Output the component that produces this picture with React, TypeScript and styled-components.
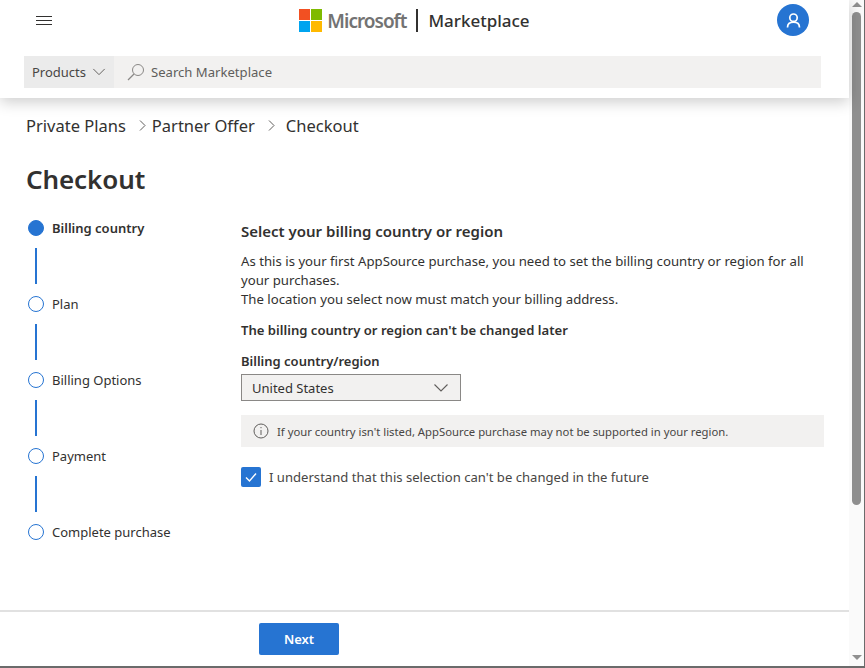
import React from 'react';
import styled, { createGlobalStyle } from 'styled-components';

const GlobalStyle = createGlobalStyle`
  html, body {
    margin: 0;
    height: 100%;
    overflow: hidden;
    background: #fff;
  }
  #root {
    height: 100%;
  }
  * {
    box-sizing: border-box;
  }
`;

const Frame = styled.div`
  width: 865px;
  height: 668px;
  display: flex;
  font-family: 'Noto Sans', 'Open Sans', sans-serif;
  color: #323130;
  border-right: 1px solid #6b6b6b;
  border-bottom: 2px solid #6b6b6b;
  overflow: hidden;
`;

const Main = styled.div`
  width: 849px;
  display: flex;
  flex-direction: column;
`;

const Header = styled.header`
  height: 98px;
  flex: none;
  padding: 0 28px 0 24px;
  background: #fff;
  box-shadow: 0 4px 14px rgba(0, 0, 0, 0.2);
  position: relative;
  display: flex;
  flex-direction: column;
`;

const TopRow = styled.div`
  height: 56px;
  flex: none;
  display: grid;
  grid-template-columns: 1fr auto 1fr;
  padding: 4px 12px 0 12px;
  align-items: start;
`;

const MenuButton = styled.div`
  width: 16px;
  height: 9px;
  margin-top: 12px;
  display: flex;
  flex-direction: column;
  justify-content: space-between;
  span {
    display: block;
    height: 1px;
    background: #323130;
  }
`;

const Brand = styled.div`
  display: flex;
  align-items: center;
  height: 33px;
  margin-left: -16px;
`;

const LogoGrid = styled.div`
  width: 23px;
  height: 23px;
  display: grid;
  grid-template-columns: 11px 11px;
  grid-template-rows: 11px 11px;
  gap: 1px;
  margin-right: 5px;
`;

const LogoTile = styled.span<{ $color: string }>`
  background: ${(p) => p.$color};
`;

const BrandName = styled.span`
  font-size: 19px;
  font-weight: 600;
  letter-spacing: -1px;
  color: #737373;
`;

const BrandDivider = styled.span`
  width: 2px;
  height: 23px;
  background: #323130;
  margin: 0 10px 0 10px;
`;

const ProductName = styled.span`
  font-size: 17px;
  font-weight: 500;
  color: #323130;
`;

const AvatarSlot = styled.div`
  display: flex;
  justify-content: flex-end;
`;

const Avatar = styled.div`
  width: 32px;
  height: 32px;
  border-radius: 50%;
  background: #2674d2;
  display: flex;
  align-items: center;
  justify-content: center;
`;

const SearchRow = styled.div`
  height: 32px;
  width: 797px;
  display: flex;
  background: #f2f1f0;
`;

const ProductsButton = styled.div`
  width: 90px;
  flex: none;
  background: #ebebeb;
  display: flex;
  align-items: center;
  padding-left: 8px;
  gap: 6px;
  font-size: 13px;
  line-height: 34px;
  color: #484644;
`;

const SearchField = styled.div`
  display: flex;
  align-items: center;
  padding-left: 13px;
  gap: 6px;
  font-size: 13.1px;
  color: #605e5c;
`;

const Content = styled.main`
  flex: 1;
  padding: 15px 0 0 26px;
  display: flex;
  flex-direction: column;
`;

const Breadcrumb = styled.nav`
  display: flex;
  align-items: center;
  height: 24px;
  font-size: 16.5px;
  color: #323130;
`;

const CrumbSep = styled.span<{ $wide?: boolean }>`
  display: flex;
  margin: 0 ${(p) => (p.$wide ? '11px' : '6px')} 0 13px;
`;

const Title = styled.h1`
  margin: 23px 0 0;
  font-size: 26px;
  line-height: 38px;
  font-weight: 600;
  letter-spacing: -0.1px;
  color: #323130;
`;

const Body = styled.div`
  display: flex;
  margin-top: 18px;
`;

const Stepper = styled.ol`
  width: 215px;
  flex: none;
  margin: 0;
  padding: 0 0 0 2px;
  list-style: none;
`;

const Step = styled.li`
  display: flex;
  flex-direction: column;
`;

const StepRow = styled.div`
  display: flex;
  align-items: center;
  gap: 8px;
  height: 24px;
`;

const StepDot = styled.span<{ $active?: boolean }>`
  width: 16px;
  height: 16px;
  flex: none;
  border-radius: 50%;
  border: 1.5px solid #2674d2;
  background: ${(p) => (p.$active ? '#2674d2' : '#fff')};
`;

const StepLabel = styled.span<{ $active?: boolean }>`
  font-size: 13px;
  font-weight: ${(p) => (p.$active ? 600 : 400)};
  color: #323130;
`;

const Connector = styled.span`
  width: 2px;
  height: 36px;
  margin: 8px 0 8px 7px;
  background: #2674d2;
`;

const Panel = styled.section`
  width: 583px;
  flex: none;
`;

const PanelTitle = styled.h2`
  margin: 0;
  padding-top: 4px;
  font-size: 15px;
  line-height: 22px;
  font-weight: 600;
  color: #323130;
`;

const Paragraph = styled.p`
  margin: 10px 0 0;
  font-size: 13.2px;
  line-height: 19px;
  color: #323130;
  width: 575px;
`;

const Warning = styled.p`
  margin: 11px 0 0;
  font-size: 13.1px;
  line-height: 20px;
  font-weight: 600;
`;

const FieldLabel = styled.label`
  display: block;
  margin-top: 11px;
  font-size: 13px;
  line-height: 20px;
  font-weight: 600;
`;

const Select = styled.div`
  width: 220px;
  height: 27px;
  margin-top: 3px;
  display: flex;
  align-items: center;
  justify-content: space-between;
  padding: 0 11px 0 10px;
  background: #f2f1f0;
  border: 1px solid #8a8886;
  font-size: 13px;
  color: #323130;
`;

const InfoBox = styled.div`
  height: 32px;
  margin-top: 14px;
  display: flex;
  align-items: center;
  gap: 8px;
  padding-left: 12px;
  background: #f2f1f0;
  font-size: 11.3px;
  color: #484644;
`;

const CheckRow = styled.div`
  display: flex;
  align-items: center;
  gap: 8px;
  margin-top: 20px;
  font-size: 13.1px;
  color: #484644;
`;

const CheckBox = styled.span`
  width: 20px;
  height: 20px;
  border-radius: 2px;
  background: #2674d2;
  display: flex;
  align-items: center;
  justify-content: center;
`;

const Footer = styled.footer`
  height: 56px;
  flex: none;
  border-top: 2px solid #e1e1e1;
  padding: 11px 0 0 259px;
`;

const NextButton = styled.button`
  width: 80px;
  height: 32px;
  border: 0;
  border-radius: 2px;
  background: #2674d2;
  color: #fff;
  font-family: inherit;
  font-size: 13px;
  font-weight: 600;
`;

const Scrollbar = styled.div`
  width: 15px;
  flex: none;
  background: #fafafa;
  display: flex;
  flex-direction: column;
  align-items: center;
`;

const ScrollArrow = styled.span<{ $down?: boolean }>`
  flex: none;
  margin: ${(p) => (p.$down ? 'auto 0 6px' : '2px 0 5px')};
  width: 0;
  height: 0;
  border-left: 5px solid transparent;
  border-right: 5px solid transparent;
  ${(p) =>
    p.$down ? 'border-top: 5px solid #8f8f8f;' : 'border-bottom: 5px solid #8f8f8f;'}
`;

const ScrollThumb = styled.span`
  width: 9px;
  height: 493px;
  border-radius: 5px;
  background: #8f8f8f;
`;

const Chevron = ({ size, color }: { size: number; color: string }) => (
  <svg width={size} height={size} viewBox="0 0 16 16" fill="none" stroke={color} strokeWidth="1.1">
    <path d="M1.5 4.5 8 11l6.5-6.5" />
  </svg>
);

const CrumbArrow = ({ color }: { color: string }) => (
  <svg width="7" height="11" viewBox="0 0 7 11" fill="none" stroke={color} strokeWidth="1">
    <path d="M1 .5l5 5-5 5" />
  </svg>
);

const steps = ['Billing country', 'Plan', 'Billing Options', 'Payment', 'Complete purchase'];

export default function App() {
  return (
    <>
      <GlobalStyle />
      <Frame>
        <Main>
          <Header>
            <TopRow>
              <MenuButton>
                <span />
                <span />
                <span />
              </MenuButton>
              <Brand>
                <LogoGrid>
                  <LogoTile $color="#f25022" />
                  <LogoTile $color="#7fba00" />
                  <LogoTile $color="#00a4ef" />
                  <LogoTile $color="#ffb900" />
                </LogoGrid>
                <BrandName>Microsoft</BrandName>
                <BrandDivider />
                <ProductName>Marketplace</ProductName>
              </Brand>
              <AvatarSlot>
                <Avatar>
                  <svg width="15" height="15" viewBox="0 0 15 15" fill="none" stroke="#fff" strokeWidth="1.7">
                    <circle cx="7.5" cy="4.7" r="3.7" />
                    <path d="M1.5 14.5c0-3.4 2.2-5.3 6-5.3s6 1.9 6 5.3" />
                  </svg>
                </Avatar>
              </AvatarSlot>
            </TopRow>
            <SearchRow>
              <ProductsButton>
                Products
                <Chevron size={14} color="#605e5c" />
              </ProductsButton>
              <SearchField>
                <svg width="18" height="18" viewBox="0 0 18 18" fill="none" stroke="#8a8886" strokeWidth="1">
                  <circle cx="11" cy="7" r="5.5" />
                  <path d="M7 11 1 17" strokeWidth="1.3" />
                </svg>
                Search Marketplace
              </SearchField>
            </SearchRow>
          </Header>
          <Content>
            <Breadcrumb>
              Private Plans
              <CrumbSep>
                <CrumbArrow color="#605e5c" />
              </CrumbSep>
              Partner Offer
              <CrumbSep $wide>
                <CrumbArrow color="#605e5c" />
              </CrumbSep>
              Checkout
            </Breadcrumb>
            <Title>Checkout</Title>
            <Body>
              <Stepper>
                {steps.map((label, i) => (
                  <Step key={label}>
                    <StepRow>
                      <StepDot $active={i === 0} />
                      <StepLabel $active={i === 0}>{label}</StepLabel>
                    </StepRow>
                    {i < steps.length - 1 && <Connector />}
                  </Step>
                ))}
              </Stepper>
              <Panel>
                <PanelTitle>Select your billing country or region</PanelTitle>
                <Paragraph>
                  As this is your first AppSource purchase, you need to set the billing country or region for all
                  your purchases.
                  <br />
                  The location you select now must match your billing address.
                </Paragraph>
                <Warning>The billing country or region can't be changed later</Warning>
                <FieldLabel>Billing country/region</FieldLabel>
                <Select>
                  United States
                  <Chevron size={16} color="#605e5c" />
                </Select>
                <InfoBox>
                  <svg width="16" height="16" viewBox="0 0 16 16" fill="none" stroke="#605e5c" strokeWidth="1">
                    <circle cx="8" cy="8" r="7" />
                    <path d="M8 7v5" />
                    <path d="M8 4v1.2" />
                  </svg>
                  If your country isn't listed, AppSource purchase may not be supported in your region.
                </InfoBox>
                <CheckRow>
                  <CheckBox>
                    <svg width="14" height="14" viewBox="0 0 14 14" fill="none" stroke="#fff" strokeWidth="1.4">
                      <path d="M2 7.5 5.5 11 12 3.5" />
                    </svg>
                  </CheckBox>
                  I understand that this selection can't be changed in the future
                </CheckRow>
              </Panel>
            </Body>
          </Content>
          <Footer>
            <NextButton>Next</NextButton>
          </Footer>
        </Main>
        <Scrollbar>
          <ScrollArrow />
          <ScrollThumb />
          <ScrollArrow $down />
        </Scrollbar>
      </Frame>
    </>
  );
}
